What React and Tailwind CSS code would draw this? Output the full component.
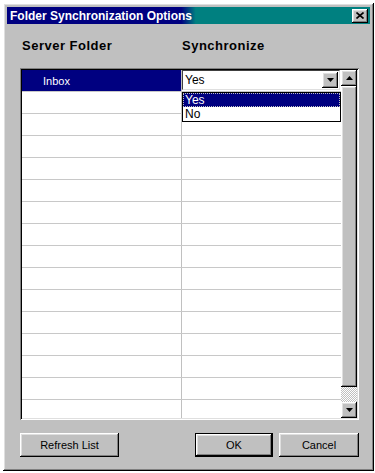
import React from "react";

const raised =
  "shadow-[inset_-1px_-1px_#000,inset_1px_1px_#fff,inset_-2px_-2px_#808080,inset_2px_2px_#dfdfdf]";
const sunken =
  "shadow-[inset_1px_1px_#808080,inset_-1px_-1px_#fff,inset_2px_2px_#000,inset_-2px_-2px_#dfdfdf]";

function Arrow({ up }) {
  return (
    <svg width="7" height="4" viewBox="0 0 7 4">
      {up ? <path d="M3.5 0L7 4H0Z" fill="#000" /> : <path d="M0 0H7L3.5 4Z" fill="#000" />}
    </svg>
  );
}

function Button({ children, def, w }) {
  return (
    <button
      className={`${w} h-[24px] bg-[#c0c0c0] text-[11px] text-black flex items-center justify-center ${
        def ? "border border-black " : ""
      }`}
    >
      <span className={`w-full h-full flex items-center justify-center ${raised}`}>{children}</span>
    </button>
  );
}

export default function App() {
  const rows = Array.from({ length: 15 });

  return (
    <div className="w-[375px] h-[473px] bg-white pt-[3px] pl-[3px] font-['Liberation_Sans',Arial,sans-serif] overflow-hidden">
      <div
        className={`w-[371px] h-[468px] bg-[#c0c0c0] p-[4px] flex flex-col ${raised}`}
      >
        {/* title bar */}
        <div className="h-[17px] flex items-center justify-between pl-[3px] pr-[2px] bg-[linear-gradient(90deg,#000080_0%,#000080_48%,#008080_52%,#008080_100%)]">
          <span className="text-white font-bold text-[12px] leading-none">Folder Synchronization Options</span>
          <span className={`w-[16px] h-[14px] bg-[#c0c0c0] flex items-center justify-center ${raised}`}>
            <svg width="8" height="7" viewBox="0 0 8 7">
              <path d="M0.5 0.5L7.5 6.5M7.5 0.5L0.5 6.5" stroke="#000" strokeWidth="1.6" />
            </svg>
          </span>
        </div>

        {/* headings */}
        <div className="mt-[14px] flex text-[13px] leading-[15px] font-bold text-black tracking-[0.5px]">
          <span className="ml-[15px] w-[160px]">Server Folder</span>
          <span>Synchronize</span>
        </div>

        {/* list */}
        <div className={`mt-[15px] ml-[13px] w-[339px] h-[352px] bg-white p-[2px] flex ${sunken}`}>
          <div className="relative w-[319px] h-full overflow-visible">
            <div className="h-full overflow-hidden">
              <div className="flex h-[22px] border-b border-[#c8c8c8]">
                <div className="w-[160px] h-[21px] bg-[#000080] text-white text-[11px] pl-[21px] pt-[3px] border-r border-[#c0c0c0]">
                  Inbox
                </div>
                <div className="flex-1 h-[21px] pr-[1px]">
                  <div className="h-[20px] bg-white border border-[#404040] border-r-[#dfdfdf] border-b-[#dfdfdf] flex items-center justify-between pl-[2px] pr-[1px]">
                    <span className="text-[12px] text-black">Yes</span>
                    <span className={`w-[16px] h-[16px] bg-[#c0c0c0] flex items-center justify-center ${raised}`}>
                      <Arrow />
                    </span>
                  </div>
                </div>
              </div>
              {rows.map((_, i) => (
                <div key={i} className="flex h-[22px] border-b border-[#c8c8c8]">
                  <div className="w-[160px] border-r border-[#c0c0c0]" />
                  <div className="flex-1" />
                </div>
              ))}
            </div>
            {/* open dropdown */}
            <div className="absolute left-[160px] top-[22px] w-[159px] h-[30px] bg-white border border-black text-[12px] leading-[14px]">
              <div className="h-[14px] bg-[#000080] text-white pl-[1px] border border-dotted border-[#c0c0c0]">
                <span className="relative -top-[1px]">Yes</span>
              </div>
              <div className="h-[14px] text-black pl-[2px]">No</div>
            </div>
          </div>

          {/* scrollbar */}
          <div className="w-[16px] h-full flex flex-col">
            <div className={`h-[16px] bg-[#c0c0c0] flex items-center justify-center ${raised}`}>
              <Arrow up />
            </div>
            <div className={`flex-1 bg-[#c0c0c0] ${raised}`} />
            <div className="h-[15px] bg-[repeating-conic-gradient(#c0c0c0_0_25%,#fff_0_50%)] bg-[length:2px_2px]" />
            <div className={`h-[16px] bg-[#c0c0c0] flex items-center justify-center ${raised}`}>
              <Arrow />
            </div>
          </div>
        </div>

        {/* buttons */}
        <div className="mt-[13px] ml-[13px] flex">
          <Button w="w-[99px]">Refresh List</Button>
          <div className="w-[76px]" />
          <Button w="w-[78px]" def>
            OK
          </Button>
          <div className="w-[6px]" />
          <Button w="w-[80px]">Cancel</Button>
        </div>
      </div>
    </div>
  );
}
